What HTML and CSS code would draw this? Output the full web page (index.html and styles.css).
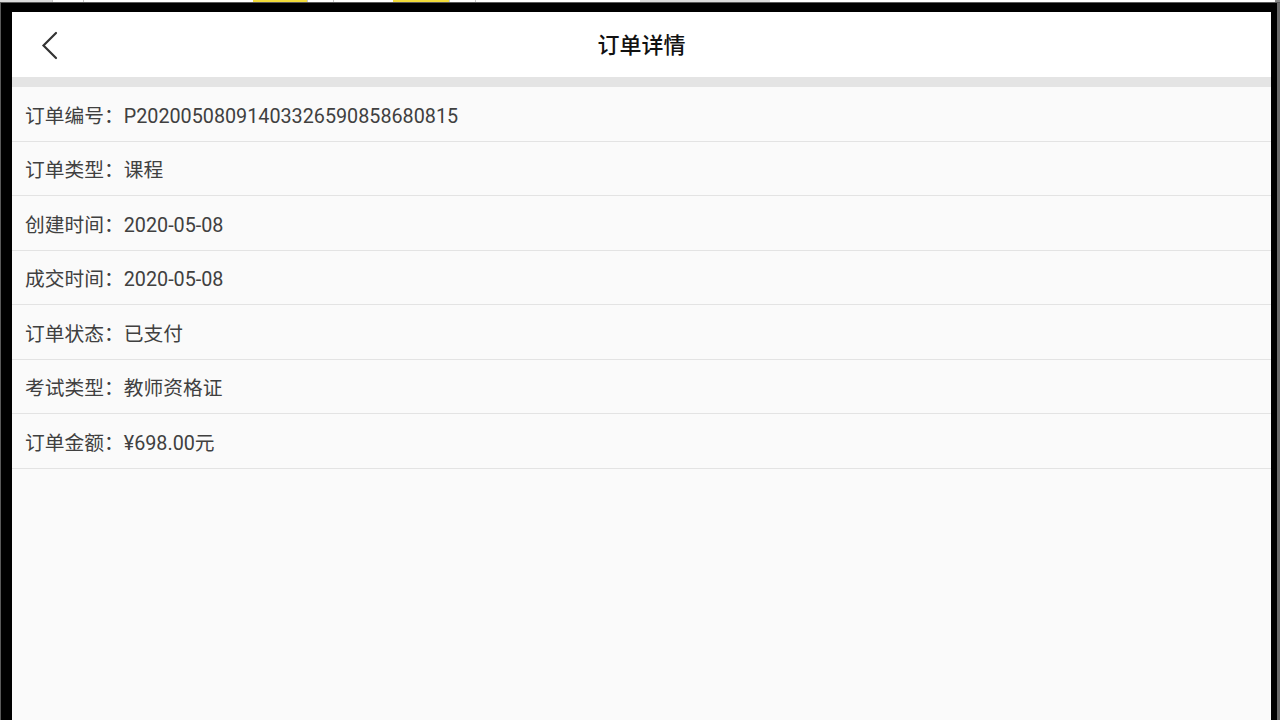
FILE: index.html
```html
<!DOCTYPE html>
<html lang="zh-CN">
<head>
<meta charset="utf-8">
<title>订单详情</title>
<link rel="stylesheet" href="styles.css">
</head>
<body>
<div class="top-strip">
  <span class="seg seg-gray" style="width:52px"></span>
  <span class="seg seg-div" style="width:31px"></span>
  <span class="seg seg-div" style="width:110px"></span>
  <span class="seg" style="width:60px"></span>
  <span class="seg seg-yellow" style="width:54px"></span>
  <span class="seg seg-div" style="width:26px"></span>
  <span class="seg seg-div" style="width:33px"></span>
  <span class="seg" style="width:27px"></span>
  <span class="seg seg-yellow" style="width:56px"></span>
  <span class="seg seg-div" style="width:26px"></span>
  <span class="seg seg-div" style="width:165px"></span>
  <span class="seg seg-gray" style="width:130px"></span>
  <span class="seg seg-fill"></span>
  <span class="seg seg-edge" style="width:5px"></span>
</div>
<div class="top-line"></div>
<div class="frame">
  <div class="screen">
    <header class="nav">
      <span class="back">
        <svg width="20" height="30" viewBox="0 0 20 30">
          <path d="M15 3 L2.5 15.5 L15 28" fill="none" stroke="#333" stroke-width="2.2" stroke-linecap="round" stroke-linejoin="miter"/>
        </svg>
      </span>
      <h1 class="title">订单详情</h1>
    </header>
    <div class="gap"></div>
    <ul class="list">
      <li class="row">订单编号：P20200508091403326590858680815</li>
      <li class="row">订单类型：课程</li>
      <li class="row">创建时间：2020-05-08</li>
      <li class="row">成交时间：2020-05-08</li>
      <li class="row">订单状态：已支付</li>
      <li class="row">考试类型：教师资格证</li>
      <li class="row">订单金额：¥698.00元</li>
    </ul>
  </div>
</div>
</body>
</html>
```

FILE: styles.css
```css
* { box-sizing: border-box; }
html, body {
  margin: 0;
  padding: 0;
  width: 1280px;
  height: 720px;
  overflow: hidden;
  background: #000;
  font-family: Roboto, "Noto Sans CJK SC", sans-serif;
}
.top-strip {
  display: flex;
  height: 2px;
  background: #fff;
}
.seg {
  display: block;
  height: 2px;
  background: #fff;
}
.seg-gray { background: #dcdcdc; }
.seg-div { border-left: 1px solid #c8c8c8; }
.seg-yellow { background: #f2dc3a; }
.seg-fill { flex: 1; }
.seg-edge { background: #888; }
.top-line {
  height: 1px;
  background: #5a5a5a;
}
.frame {
  height: 717px;
  padding: 9px 3px 0 1px;
  border-left: 1px solid #5a5a5a;
  background: #000;
  position: relative;
}
.frame::after {
  content: "";
  position: absolute;
  right: 0;
  top: 0;
  bottom: 0;
  width: 3px;
  background: #6a6a6a;
}
.screen {
  margin-left: 10px;
  margin-right: 6px;
  height: 100%;
  background: #fafafa;
  display: flex;
  flex-direction: column;
}
.nav {
  height: 65px;
  background: #fff;
  display: flex;
  align-items: center;
  padding: 0 0 0 29px;
}
.back {
  width: 20px;
  height: 30px;
  display: flex;
  margin-top: 1px;
}
.title {
  flex: 1;
  margin: -3px 49px 0 0;
  text-align: center;
  font-size: 22px;
  font-weight: 500;
  color: #111;
}
.gap {
  height: 10px;
  background: #e4e4e4;
}
.list {
  list-style: none;
  margin: 0;
  padding: 0;
}
.row {
  height: 54.5px;
  border-bottom: 1px solid #e3e3e3;
  display: flex;
  align-items: center;
  padding: 1px 0 0 13px;
  font-size: 19.75px;
  color: #404040;
}
```
